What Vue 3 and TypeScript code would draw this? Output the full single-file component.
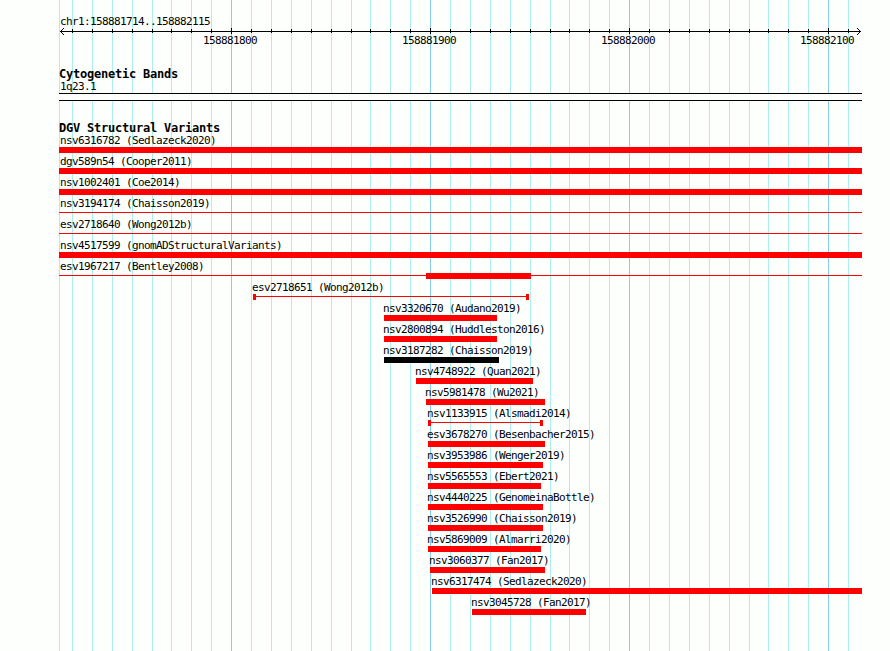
<script setup lang="ts">
interface Variant {
  name: string
  labelX: number
  start: number
  end: number
  // solid pieces drawn over the thin connecting line, as [start, end] pairs
  blocks: [number, number][]
  color?: string
}

const LEFT = 59
const RIGHT = 862
const gridLines = [
  59, 72, 92, 112, 132, 152, 171, 191, 211, 231, 251, 271, 291, 311, 331, 351, 370, 390, 410, 430,
  450, 470, 490, 510, 530, 550, 569, 589, 609, 629, 649, 669, 689, 709, 729, 749, 768, 788, 808, 828, 848,
]
const ticks = gridLines.slice(1)
const majors = [231, 430, 629, 828]
const isMajor = (x: number) => majors.includes(x)

const axisLabels = [
  { text: '158881800', x: 203 },
  { text: '158881900', x: 402 },
  { text: '158882000', x: 601 },
  { text: '158882100', x: 800 },
]

const solid = (name: string, labelX: number, start: number, end: number, color?: string): Variant => ({
  name, labelX, start, end, blocks: [[start, end]], color,
})
const line = (name: string, labelX: number, start: number, end: number, blocks: [number, number][] = []): Variant => ({
  name, labelX, start, end, blocks,
})

const variants: Variant[] = [
  solid('nsv6316782 (Sedlazeck2020)', 60, LEFT, RIGHT),
  solid('dgv589n54 (Cooper2011)', 60, LEFT, RIGHT),
  solid('nsv1002401 (Coe2014)', 60, LEFT, RIGHT),
  line('nsv3194174 (Chaisson2019)', 60, LEFT, RIGHT),
  line('esv2718640 (Wong2012b)', 60, LEFT, RIGHT),
  solid('nsv4517599 (gnomADStructuralVariants)', 60, LEFT, RIGHT),
  line('esv1967217 (Bentley2008)', 60, LEFT, RIGHT, [[426, 531]]),
  line('esv2718651 (Wong2012b)', 252, 253, 529, [[253, 256], [526, 529]]),
  solid('nsv3320670 (Audano2019)', 383, 384, 497),
  solid('nsv2800894 (Huddleston2016)', 383, 384, 497),
  solid('nsv3187282 (Chaisson2019)', 383, 384, 499, '#000000'),
  solid('nsv4748922 (Quan2021)', 415, 416, 533),
  solid('nsv5981478 (Wu2021)', 425, 426, 545),
  line('nsv1133915 (Alsmadi2014)', 427, 428, 543, [[428, 431], [540, 543]]),
  solid('esv3678270 (Besenbacher2015)', 427, 428, 545),
  solid('nsv3953986 (Wenger2019)', 427, 428, 543),
  solid('nsv5565553 (Ebert2021)', 427, 428, 541),
  solid('nsv4440225 (GenomeinaBottle)', 427, 428, 543),
  solid('nsv3526990 (Chaisson2019)', 427, 428, 543),
  solid('nsv5869009 (Almarri2020)', 427, 428, 541),
  solid('nsv3060377 (Fan2017)', 429, 430, 545),
  solid('nsv6317474 (Sedlazeck2020)', 431, 432, RIGHT),
  solid('nsv3045728 (Fan2017)', 471, 472, 586),
]
</script>

<template>
  <main class="browser">
    <svg class="grid" width="890" height="651" shape-rendering="crispEdges" aria-hidden="true">
      <rect
        v-for="x in gridLines" :key="x" :x="x" y="0" width="1" height="651"
        :class="isMajor(x) ? 'grid-major' : 'grid-minor'"
      />
    </svg>

    <header class="ruler">
      <div class="label region">chr1:158881714..158882115</div>
      <svg class="strip axis" width="890" height="9" shape-rendering="crispEdges">
        <rect x="60" y="4" width="801" height="1" />
        <rect
          v-for="x in ticks" :key="x" :x="x" :y="isMajor(x) ? 1 : 2"
          width="1" :height="isMajor(x) ? 6 : 4"
        />
        <path d="M61 3h1v1h-1zM62 2h1v1h-1zM63 1h1v1h-1zM61 5h1v1h-1zM62 6h1v1h-1zM63 7h1v1h-1z" />
        <path d="M859 3h1v1h-1zM858 2h1v1h-1zM857 1h1v1h-1zM859 5h1v1h-1zM858 6h1v1h-1zM857 7h1v1h-1z" />
      </svg>
      <div class="ruler-labels">
        <span v-for="l in axisLabels" :key="l.text" class="label">{{ l.text }}</span>
      </div>
    </header>

    <section class="bands">
      <h2 class="title">Cytogenetic Bands</h2>
      <div class="label band-name">1q23.1</div>
      <div class="band"></div>
    </section>

    <section class="variants">
      <h2 class="title">DGV Structural Variants</h2>
      <div v-for="v in variants" :key="v.name" class="variant">
        <div class="label" :style="{ marginLeft: v.labelX + 'px' }">{{ v.name }}</div>
        <svg class="strip" width="890" height="6" shape-rendering="crispEdges" :fill="v.color ?? '#ff0000'">
          <rect :x="v.start" y="2" :width="v.end - v.start" height="1" />
          <rect v-for="b in v.blocks" :key="b[0]" :x="b[0]" y="0" :width="b[1] - b[0]" height="6" />
        </svg>
      </div>
    </section>
  </main>
</template>

<style>
body {
  background: #fdfffc;
}
</style>

<style scoped>
.browser {
  position: relative;
  width: 890px;
  height: 651px;
  overflow: hidden;
  background: #fdfffc;
  color: #000;
}
.grid {
  position: absolute;
  inset: 0;
}
.grid-minor {
  fill: #afeeee;
}
.grid-major {
  fill: #87ceeb;
}
.ruler,
.bands,
.variants {
  position: relative;
}
.label {
  height: 12px;
  font-family: 'DejaVu Sans Mono', monospace;
  font-size: 11px;
  line-height: 12px;
  letter-spacing: -0.623px;
  white-space: pre;
}
.title {
  height: 12px;
  margin: 0 0 1px 59px;
  font-family: 'DejaVu Sans Mono', monospace;
  font-size: 12px;
  font-weight: bold;
  line-height: 12px;
  letter-spacing: -0.224px;
  white-space: pre;
}
.strip {
  display: block;
}
.ruler {
  height: 68px;
  padding-top: 16px;
  box-sizing: border-box;
}
.region {
  margin-left: 60px;
}
.axis {
  margin-top: -1px;
}
.ruler-labels {
  display: flex;
  gap: 145px;
  padding-left: 203px;
  margin-top: -1px;
}
.ruler-labels .label {
  width: 54px;
}
.bands {
  height: 54px;
}
.band-name {
  margin-left: 60px;
}
.band {
  width: 803px;
  height: 8px;
  margin-left: 59px;
  box-sizing: border-box;
  border-top: 1px solid #000;
  border-bottom: 1px solid #000;
  background: #fdfffc;
}
.variant {
  height: 21px;
}
</style>
